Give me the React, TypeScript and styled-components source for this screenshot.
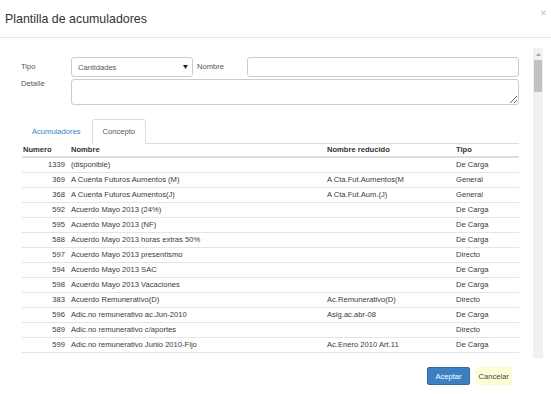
import * as React from "react"
import styled, { createGlobalStyle } from "styled-components"

const GlobalStyle = createGlobalStyle`
  html, body {
    margin: 0;
    padding: 0;
    background: #fff;
  }
  body {
    font-family: "Liberation Sans", Arial, sans-serif;
    color: #333;
  }
`

interface Concepto {
  numero: number
  nombre: string
  reducido: string
  tipo: string
}

const conceptos: Concepto[] = [
  { numero: 1339, nombre: "(disponible)", reducido: "", tipo: "De Carga" },
  { numero: 369, nombre: "A Cuenta Futuros Aumentos (M)", reducido: "A Cta.Fut.Aumentos(M", tipo: "General" },
  { numero: 368, nombre: "A Cuenta Futuros Aumentos(J)", reducido: "A Cta.Fut.Aum.(J)", tipo: "General" },
  { numero: 592, nombre: "Acuerdo Mayo 2013 (24%)", reducido: "", tipo: "De Carga" },
  { numero: 595, nombre: "Acuerdo Mayo 2013 (NF)", reducido: "", tipo: "De Carga" },
  { numero: 588, nombre: "Acuerdo Mayo 2013 horas extras 50%", reducido: "", tipo: "De Carga" },
  { numero: 597, nombre: "Acuerdo Mayo 2013 presentismo", reducido: "", tipo: "Directo" },
  { numero: 594, nombre: "Acuerdo Mayo 2013 SAC", reducido: "", tipo: "De Carga" },
  { numero: 598, nombre: "Acuerdo Mayo 2013 Vacaciones", reducido: "", tipo: "De Carga" },
  { numero: 383, nombre: "Acuerdo Remunerativo(D)", reducido: "Ac.Remunerativo(D)", tipo: "Directo" },
  { numero: 596, nombre: "Adic.no remunerativo ac.Jun-2010", reducido: "Asig.ac.abr-08", tipo: "De Carga" },
  { numero: 589, nombre: "Adic.no remunerativo c/aportes", reducido: "", tipo: "Directo" },
  { numero: 599, nombre: "Adic.no remunerativo Junio 2010-Fijo", reducido: "Ac.Enero 2010 Art.11", tipo: "De Carga" },
]

const Modal = styled.div`
  width: 551px;
  height: 394px;
  display: flex;
  flex-direction: column;
  overflow: hidden;
  font-size: 7.6px;
`

const Header = styled.div`
  height: 37px;
  border-bottom: 1px solid #e5e5e5;
  display: flex;
  align-items: center;
  justify-content: space-between;
  padding: 0 5px 0 5px;
`

const Title = styled.h4`
  margin: 0;
  font-size: 12.4px;
  font-weight: normal;
  color: #333;
`

const Close = styled.span`
  align-self: flex-start;
  margin-top: 8px;
  font-size: 9px;
  font-weight: bold;
  color: #c8c8c8;
`

const Body = styled.div`
  display: flex;
  height: 310px;
  margin-top: 10px;
`

const Content = styled.div`
  flex: 1;
  overflow: hidden;
  padding: 9px 14px 0 21px;
`

const ScrollTrack = styled.div`
  width: 10px;
  margin-right: 8px;
  background: #f1f1f1;
  display: flex;
  flex-direction: column;
  align-items: center;
`

const ScrollArrow = styled.div`
  height: 12px;
  display: flex;
  align-items: center;
  justify-content: center;
`

const ScrollThumb = styled.div`
  width: 8px;
  height: 32px;
  background: #c1c1c1;
`

const FormRow = styled.div<{ $gap?: number }>`
  display: flex;
  margin-bottom: ${p => p.$gap ?? 2}px;
`

const Label = styled.label<{ $top?: number; $indent?: number }>`
  width: 50px;
  flex: none;
  margin-left: ${p => p.$indent ?? 0}px;
  padding-top: ${p => p.$top ?? 0}px;
  color: #555;
  line-height: 9px;
`

const SelectBox = styled.div`
  width: 122px;
  height: 20px;
  box-sizing: border-box;
  border: 1px solid #ccc;
  border-radius: 3px;
  display: flex;
  align-items: center;
  justify-content: space-between;
  padding: 0 4px 0 6px;
  color: #555;
`

const Input = styled.input`
  flex: 1;
  height: 20px;
  box-sizing: border-box;
  border: 1px solid #ccc;
  border-radius: 3px;
  margin: 0;
  font: inherit;
`

const TextArea = styled.textarea`
  flex: 1;
  height: 26px;
  box-sizing: border-box;
  border: 1px solid #ccc;
  border-radius: 3px;
  margin: 0;
  font: inherit;
`

const Nav = styled.div`
  display: flex;
  margin-top: 14px;
  border-bottom: 1px solid #ddd;
`

const Tab = styled.div<{ $active?: boolean }>`
  padding: 0 10px 1px;
  line-height: 23px;
  border: 1px solid ${p => (p.$active ? "#ddd" : "transparent")};
  border-bottom: none;
  border-radius: 3px 3px 0 0;
  margin-bottom: -1px;
  background: #fff;
  color: ${p => (p.$active ? "#555" : "#3a84c4")};
`

const Table = styled.div`
  margin-left: 1px;
`

const Row = styled.div<{ $head?: boolean }>`
  display: grid;
  grid-template-columns: 47px 256px 129px 1fr;
  height: ${p => (p.$head ? 12 : 14)}px;
  line-height: ${p => (p.$head ? 12 : 14)}px;
  border-bottom: ${p => (p.$head ? "2px solid #ddd" : "1px solid #e5e5e5")};
  font-weight: ${p => (p.$head ? "bold" : "normal")};
  color: ${p => (p.$head ? "#333" : "#3a3a3a")};
`

const Cell = styled.div<{ $num?: boolean }>`
  padding: ${p => (p.$num ? "0 4px 0 1px" : "0 0 0 2px")};
  text-align: ${p => (p.$num ? "right" : "left")};
  white-space: nowrap;
  overflow: hidden;
`

const HeadCell = styled(Cell)`
  text-align: left;
`

const Footer = styled.div`
  display: flex;
  justify-content: flex-end;
  gap: 6px;
  padding: 9px 39px 0 0;
`

const Button = styled.button<{ $primary?: boolean }>`
  height: 18px;
  padding: ${p => (p.$primary ? "0 7px" : "0 2px")};
  margin: 0;
  font: inherit;
  border-radius: 2px;
  border: 1px solid ${p => (p.$primary ? "#2e6da4" : "#fbfbd6")};
  background: ${p => (p.$primary ? "#3c80c3" : "#fdfdd8")};
  color: ${p => (p.$primary ? "#fff" : "#444")};
`

export default function App() {
  return (
    <>
      <GlobalStyle />
      <Modal>
        <Header>
          <Title>Plantilla de acumuladores</Title>
          <Close>×</Close>
        </Header>
        <Body>
          <Content>
            <FormRow>
              <Label $top={5}>Tipo</Label>
              <SelectBox>
                <span>Cantidades</span>
                <svg width="5" height="4" viewBox="0 0 5 4">
                  <path d="M0 0h5L2.5 4z" fill="#222" />
                </svg>
              </SelectBox>
              <Label $top={5} $indent={4}>
                Nombre
              </Label>
              <Input />
            </FormRow>
            <FormRow $gap={0}>
              <Label>Detalle</Label>
              <TextArea />
            </FormRow>
            <Nav>
              <Tab>Acumuladores</Tab>
              <Tab $active>Concepto</Tab>
            </Nav>
            <Table>
              <Row $head>
                <HeadCell $num>Numero</HeadCell>
                <HeadCell>Nombre</HeadCell>
                <HeadCell>Nombre reducido</HeadCell>
                <HeadCell>Tipo</HeadCell>
              </Row>
              {conceptos.map(c => (
                <Row key={c.numero}>
                  <Cell $num>{c.numero}</Cell>
                  <Cell>{c.nombre}</Cell>
                  <Cell>{c.reducido}</Cell>
                  <Cell>{c.tipo}</Cell>
                </Row>
              ))}
            </Table>
          </Content>
          <ScrollTrack>
            <ScrollArrow>
              <svg width="5" height="3" viewBox="0 0 5 3">
                <path d="M2.5 0L5 3H0z" fill="#a3a3a3" />
              </svg>
            </ScrollArrow>
            <ScrollThumb />
          </ScrollTrack>
        </Body>
        <Footer>
          <Button $primary>Aceptar</Button>
          <Button>Cancelar</Button>
        </Footer>
      </Modal>
    </>
  )
}
